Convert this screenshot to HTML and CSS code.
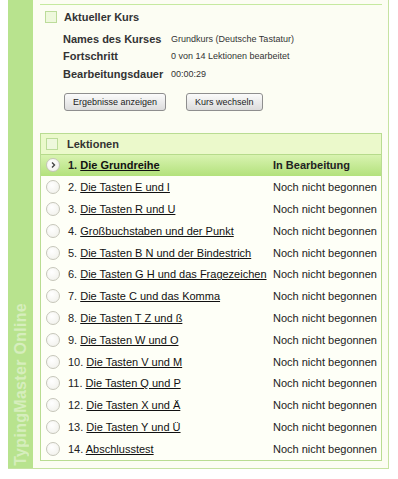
FILE: index.html
```html
<!DOCTYPE html>
<html lang="de">
<head>
    <meta charset="UTF-8">
    <meta name="viewport" content="width=device-width, initial-scale=1.0">
    <title>TypingMaster Online</title>
    <link rel="stylesheet" href="styles.css">
</head>
<body>

    <div class="panel">
        <!-- Green side strip with the product name -->
        <div class="sidebar">
            <span class="brand">TypingMaster Online</span>
        </div>

        <div class="main">
            <!-- Current course -->
            <div class="course">
                <div class="box-title"><span class="check"></span>Aktueller Kurs</div>
                <div class="course-info">
                    <span class="label">Names des Kurses</span>
                    <span class="value">Grundkurs (Deutsche Tastatur)</span>
                    <span class="label">Fortschritt</span>
                    <span class="value">0 von 14 Lektionen bearbeitet</span>
                    <span class="label">Bearbeitungsdauer</span>
                    <span class="value">00:00:29</span>
                </div>
                <div class="actions">
                    <button class="btn">Ergebnisse anzeigen</button>
                    <button class="btn">Kurs wechseln</button>
                </div>
            </div>

            <!-- Lessons -->
            <div class="lessons">
                <div class="lessons-head"><span class="check"></span>Lektionen</div>
                <ul class="lesson-list">
                    <li class="lesson active">
                        <span class="dot"><svg width="8" height="8" viewBox="0 0 8 8"><path d="M3 1.5 L5.5 4 L3 6.5" fill="none" stroke="#444" stroke-width="1.4"/></svg></span>
                        <span class="title">1. <a href="#">Die Grundreihe</a></span>
                        <span class="status">In Bearbeitung</span>
                    </li>
                    <li class="lesson"><span class="dot"></span><span class="title">2. <a href="#">Die Tasten E und I</a></span><span class="status">Noch nicht begonnen</span></li>
                    <li class="lesson"><span class="dot"></span><span class="title">3. <a href="#">Die Tasten R und U</a></span><span class="status">Noch nicht begonnen</span></li>
                    <li class="lesson"><span class="dot"></span><span class="title">4. <a href="#">Großbuchstaben und der Punkt</a></span><span class="status">Noch nicht begonnen</span></li>
                    <li class="lesson"><span class="dot"></span><span class="title">5. <a href="#">Die Tasten B N und der Bindestrich</a></span><span class="status">Noch nicht begonnen</span></li>
                    <li class="lesson"><span class="dot"></span><span class="title">6. <a href="#">Die Tasten G H und das Fragezeichen</a></span><span class="status">Noch nicht begonnen</span></li>
                    <li class="lesson"><span class="dot"></span><span class="title">7. <a href="#">Die Taste C und das Komma</a></span><span class="status">Noch nicht begonnen</span></li>
                    <li class="lesson"><span class="dot"></span><span class="title">8. <a href="#">Die Tasten T Z und ß</a></span><span class="status">Noch nicht begonnen</span></li>
                    <li class="lesson"><span class="dot"></span><span class="title">9. <a href="#">Die Tasten W und O</a></span><span class="status">Noch nicht begonnen</span></li>
                    <li class="lesson"><span class="dot"></span><span class="title">10. <a href="#">Die Tasten V und M</a></span><span class="status">Noch nicht begonnen</span></li>
                    <li class="lesson"><span class="dot"></span><span class="title">11. <a href="#">Die Tasten Q und P</a></span><span class="status">Noch nicht begonnen</span></li>
                    <li class="lesson"><span class="dot"></span><span class="title">12. <a href="#">Die Tasten X und Ä</a></span><span class="status">Noch nicht begonnen</span></li>
                    <li class="lesson"><span class="dot"></span><span class="title">13. <a href="#">Die Tasten Y und Ü</a></span><span class="status">Noch nicht begonnen</span></li>
                    <li class="lesson"><span class="dot"></span><span class="title">14. <a href="#">Abschlusstest</a></span><span class="status">Noch nicht begonnen</span></li>
                </ul>
            </div>
        </div>
    </div>

</body>
</html>
```

FILE: styles.css
```css
body {
    margin: 0;
    background: #fff;
    font-family: "Liberation Sans", Arial, sans-serif;
    font-size: 11px;
    color: #222;
}

.panel {
    display: flex;
    width: 380px;
    margin-left: 8px;
    background: #fcfdf3;
    border-right: 1px solid #c6e3a2;
    border-bottom: 1px solid #c6e3a2;
}

.sidebar {
    width: 25px;
    background: #b8e38e;
    display: flex;
    flex-direction: column;
    justify-content: flex-end;
    align-items: center;
    padding-bottom: 2px;
}

.brand {
    writing-mode: vertical-rl;
    transform: rotate(180deg);
    font-weight: bold;
    font-size: 16px;
    letter-spacing: 0.3px;
    color: #d6eebd;
}

.main {
    flex: 1;
    padding: 4px 6px 7px 7px;
}

.course {
    border-top: 1px solid #c6e9a0;
    padding: 6px 0 0 5px;
}

.box-title {
    display: flex;
    align-items: center;
    font-weight: bold;
    color: #333;
    height: 12px;
}

.check {
    width: 10px;
    height: 10px;
    border: 1px solid #bcdc9a;
    background: #eef8dc;
    margin-right: 7px;
}

.course-info {
    display: grid;
    grid-template-columns: 108px auto;
    grid-auto-rows: 17.5px;
    align-items: center;
    margin: 7px 0 0 18px;
}

.label {
    font-weight: bold;
    color: #333;
}

.value {
    font-size: 9px;
    color: #333;
}

.actions {
    display: flex;
    gap: 20px;
    margin: 10px 0 0 19px;
}

.btn {
    height: 18px;
    padding: 0 8px;
    font-family: "Liberation Sans", Arial, sans-serif;
    font-size: 9px;
    color: #222;
    border: 1px solid #8e8e8e;
    border-radius: 3px;
    background: linear-gradient(#fbfbfb, #dcdcdc);
}

.lessons {
    margin-top: 22px;
    border: 1px solid #b9dc92;
    background: #fefff7;
}

.lessons-head {
    display: flex;
    align-items: center;
    height: 20px;
    padding-left: 5px;
    background: #ebf9cb;
    border-bottom: 1px solid #b6db8b;
    font-weight: bold;
    color: #333;
}

.lessons-head .check {
    margin-right: 9px;
}

.lesson-list {
    list-style-type: none;
    margin: 0;
    padding: 0;
}

.lesson {
    display: flex;
    align-items: center;
    height: 21.8px;
    padding-left: 5px;
}

.lesson.active {
    background: linear-gradient(#d8f3b0, #b3e17c);
    font-weight: bold;
}

.dot {
    width: 12px;
    height: 12px;
    border: 1px solid #c6c6ba;
    border-radius: 50%;
    background: radial-gradient(circle at 40% 35%, #ffffff, #efefe8);
    margin-right: 8px;
    display: flex;
    align-items: center;
    justify-content: center;
}

.title {
    flex: 1;
    white-space: nowrap;
}

.title a {
    color: #111;
    text-decoration: underline;
}

.status {
    width: 108px;
    white-space: nowrap;
}
```
